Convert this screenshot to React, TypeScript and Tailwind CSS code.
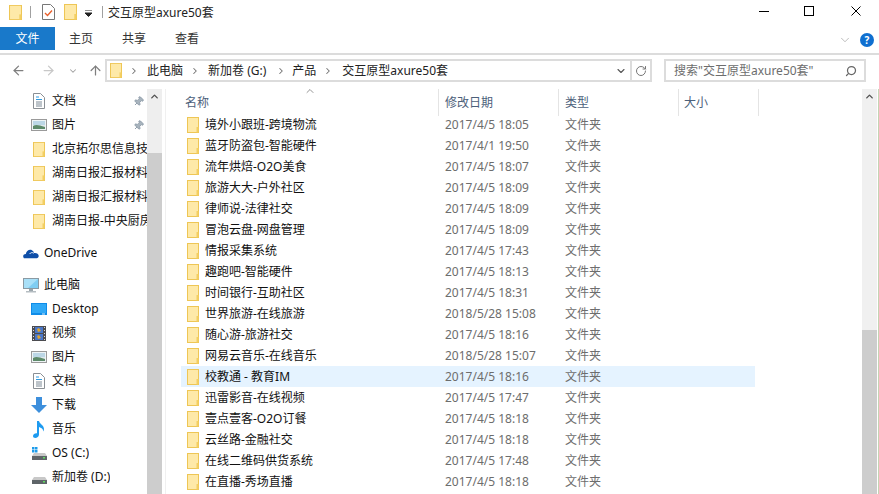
import { ArrowLeft, ArrowRight, ArrowUp, ChevronDown, ChevronRight, ChevronUp, Pin, RotateCw, Search } from "lucide-react";

const files = [
  ["境外小跟班-跨境物流", "2017/4/5 18:05"],
  ["蓝牙防盗包-智能硬件", "2017/4/1 19:50"],
  ["流年烘焙-O2O美食", "2017/4/5 18:07"],
  ["旅游大大-户外社区", "2017/4/5 18:09"],
  ["律师说-法律社交", "2017/4/5 18:09"],
  ["冒泡云盘-网盘管理", "2017/4/5 18:09"],
  ["情报采集系统", "2017/4/5 17:43"],
  ["趣跑吧-智能硬件", "2017/4/5 18:13"],
  ["时间银行-互助社区", "2017/4/5 18:31"],
  ["世界旅游-在线旅游", "2018/5/28 15:08"],
  ["随心游-旅游社交", "2017/4/5 18:16"],
  ["网易云音乐-在线音乐", "2018/5/28 15:07"],
  ["校教通 - 教育IM", "2017/4/5 18:16"],
  ["迅雷影音-在线视频", "2017/4/5 17:47"],
  ["壹点壹客-O2O订餐", "2017/4/5 18:18"],
  ["云丝路-金融社交", "2017/4/5 18:18"],
  ["在线二维码供货系统", "2017/4/5 17:48"],
  ["在直播-秀场直播", "2017/4/5 18:18"],
];

function Folder({ w = 12, h = 16 }: { w?: number; h?: number }) {
  return (
    <svg width={w} height={h} viewBox="0 0 12 16" preserveAspectRatio="none" className="shrink-0">
      <rect x="0.5" y="0.5" width="11" height="15" fill="#fde28f" stroke="#eec655" />
      <rect x="1" y="1" width="10" height="14" fill="#fee9a8" />
      <rect x="9.500" y="10" width="2" height="5.500" fill="#f3cf63" />
    </svg>
  );
}

function DocIcon() {
  return (
    <svg width="12" height="16" viewBox="0 0 12 16" className="shrink-0">
      <path d="M.5.5h7l4 4v11H.5z" fill="#fff" stroke="#8a8f94" />
      <path d="M3 4h3M3 6.500h6" stroke="#2f9ae0" />
      <path d="M3 9h6M3 11h6M3 13h6" stroke="#7d8a96" />
    </svg>
  );
}

function PictureIcon() {
  return (
    <svg width="16" height="12" viewBox="0 0 16 12" className="shrink-0">
      <rect x="0.500" y="0.500" width="15" height="11" fill="#eef4f6" stroke="#9a9a9a" />
      <rect x="2" y="2" width="12" height="4" fill="#bcd7e6" />
      <path d="M2 6h12v4H2z" fill="#5d8a6a" />
      <path d="M2 7c3-2 6-1 12 1v-2H2z" fill="#dfe9ec" />
    </svg>
  );
}

function CloudIcon() {
  return (
    <svg width="16" height="11" viewBox="0 0 17 11" className="shrink-0">
      <path d="M1 10.500C-.5 9 0 6 3 6c.5-3 3.500-5.500 6.500-4 1.500.8 2 2 2.200 3 2.500-.5 5 1 5 3.200 0 1.300-1 2.300-2 2.300z" fill="#0f4fa8" />
      <path d="M7 6c1-1.500 3-2 4.500-.8" stroke="#fff" fill="none" />
    </svg>
  );
}

function PcIcon() {
  return (
    <svg width="16" height="15" viewBox="0 0 16 15" className="shrink-0">
      <rect x="0.500" y="0.500" width="15" height="10" fill="#7fcdf2" stroke="#8b9aa3" />
      <path d="M1 1h14L5 10H1z" fill="#a9e0f8" />
      <rect x="6" y="11" width="4" height="2" fill="#9aa5ab" />
      <rect x="3" y="13" width="10" height="1.500" fill="#b5bdc2" />
    </svg>
  );
}

function DesktopIcon() {
  return (
    <svg width="16" height="12" viewBox="0 0 16 12" className="shrink-0">
      <rect width="16" height="12" fill="#0f8ce8" />
      <rect x="1" y="1" width="14" height="9" fill="#2fa9f7" />
      <rect x="11" y="10.500" width="3" height="1" fill="#d8eefc" />
    </svg>
  );
}

function VideoIcon() {
  return (
    <svg width="14" height="15" viewBox="0 0 14 15" className="shrink-0">
      <rect width="14" height="15" fill="#4c4c50" />
      <rect x="3" y="1" width="8" height="6" fill="#4a77c8" />
      <rect x="3" y="8" width="8" height="6" fill="#4a77c8" />
      <path d="M5 3l2-1 2 3-3 1zM5 10l2-1 2 3-3 1z" fill="#e0a52f" />
      <path d="M1 1h1v1H1zM1 4h1v1H1zM1 7h1v1H1zM1 10h1v1H1zM1 13h1v1H1zM12 1h1v1h-1zM12 4h1v1h-1zM12 7h1v1h-1zM12 10h1v1h-1zM12 13h1v1h-1z" fill="#ddd" />
    </svg>
  );
}

function DownloadIcon() {
  return (
    <svg width="16" height="16" viewBox="0 0 16 16" className="shrink-0">
      <path d="M5 0h6v8h5l-8 8-8-8h5z" fill="#3d8fdc" />
    </svg>
  );
}

function MusicIcon() {
  return (
    <svg width="12" height="17" viewBox="0 0 12 17" className="shrink-0">
      <path d="M4 0h2c.5 3 5 4 5 8 0 1-.3 1.800-.8 2.500.2-2.500-2-3.700-4.200-4.500V13.500C6 15.500 4 17 2.300 17 .8 17 0 16 0 15c0-1.800 2-3 4-2.700z" fill="#1e9bf0" />
    </svg>
  );
}

function DriveIcon({ os }: { os?: boolean }) {
  return (
    <svg width="15" height="13" viewBox="0 0 15 13" className="shrink-0">
      {os && <path d="M0 0h2.500v2.500H0zM3 0h2.500v2.500H3zM0 3h2.500v2.500H0zM3 3h2.500v2.500H3z" fill="#1c9bea" />}
      <path d="M2 6h11l2 3H0z" fill="#c8c8c8" />
      <rect y="9" width="15" height="4" fill="#5e6468" />
      <rect x="11" y="10" width="2" height="1.500" fill="#5fdc5f" />
    </svg>
  );
}

function NavRow({ icon, label, indent = "pl-[31px]", pin, className = "h-6" }: { icon: React.ReactNode; label: string; indent?: string; pin?: boolean; className?: string }) {
  return (
    <div className={`flex items-center gap-[5px] ${indent} ${className} relative`}>
      <span className="w-4 flex justify-center items-center shrink-0">{icon}</span>
      <span className="whitespace-nowrap overflow-hidden text-[#111]">{label}</span>
      {pin && <Pin size={11} className="absolute left-[133px] top-[7px] text-[#8d9ba8] rotate-45" fill="#a8b4be" />}
    </div>
  );
}

export default function App() {
  return (
    <div className="w-[879px] h-[494px] bg-white overflow-hidden flex flex-col text-[12px] text-[#111]" style={{ fontFamily: '"Noto Sans", "Noto Sans CJK SC", sans-serif' }}>
      {/* TITLE BAR */}
      <div className="h-[27px] flex items-center shrink-0 pl-[9px] pb-[3px]">
        <Folder w={13} h={15} />
        <div className="w-px h-3 bg-[#a0a0a0] ml-2" />
        <svg width="13" height="16" viewBox="0 0 13 16" className="ml-[11px]">
          <path d="M.5.5h8l4 4v11H.5z" fill="#fff" stroke="#777" />
          <path d="M3 9l2.500 2.500L10 6.500" stroke="#e8602c" strokeWidth="1.400" fill="none" />
        </svg>
        <div className="ml-[9px]"><Folder w={13} h={16} /></div>
        <svg width="8" height="7" viewBox="0 0 8 7" className="ml-2 mt-0.5">
          <path d="M0 0h7M0 3h7l-3.500 3.500z" stroke="#222" fill="#222" strokeWidth="1" />
        </svg>
        <div className="w-px h-3 bg-[#a0a0a0] ml-[9px]" />
        <span className="ml-[5px] mt-[1px] text-[#222]">交互原型axure50套</span>
        <div className="ml-auto flex items-center pr-[18px] -mt-[2px]">
          <svg width="10" height="10" viewBox="0 0 10 10"><path d="M0 5.500h10" stroke="#000" /></svg>
          <svg width="10" height="10" viewBox="0 0 10 10" className="ml-[35px]"><rect x="0.500" y="0.500" width="9" height="9" fill="none" stroke="#000" /></svg>
          <svg width="10" height="10" viewBox="0 0 10 10" className="ml-[37px]"><path d="M.5.5l9 9M9.500.5l-9 9" stroke="#000" /></svg>
        </div>
      </div>

      {/* RIBBON */}
      <div className="h-[28px] shrink-0 flex items-start border-b-2 border-[#dcdcdc]">
        <div className="w-[55px] h-[23px] bg-[#1979ca] text-white flex items-center justify-center">文件</div>
        <div className="flex h-[23px] items-center pl-[14px] gap-[29px] text-[#333]">
          <span>主页</span>
          <span>共享</span>
          <span>查看</span>
        </div>
        <div className="ml-auto flex items-center h-[26px] pr-[5px]">
          <ChevronDown size={14} strokeWidth={1.200} className="text-[#a0a0a0] mr-[8px]" />
          <div className="w-[14px] h-[14px] rounded-full bg-[#0f6fd0] text-white font-bold text-[10px] flex items-center justify-center">?</div>
        </div>
      </div>

      {/* ADDRESS BAR */}
      <div className="h-[34px] shrink-0 flex items-center pb-[3px]">
        <ArrowLeft size={15} strokeWidth={2} className="ml-[11px] text-[#7f7f7f]" />
        <ArrowRight size={15} strokeWidth={2} className="ml-[15px] text-[#c8c8c8]" />
        <ChevronDown size={10} strokeWidth={2.500} className="ml-[12px] text-[#a0a0a0]" />
        <ArrowUp size={15} strokeWidth={2} className="ml-[10px] text-[#7f7f7f]" />
        <div className="ml-[2px] w-[547px] h-[23px] border-2 border-[#dcdcdc] flex items-center pl-[3px] text-[#222]">
          <Folder w={12} h={15} />
          <ChevronRight size={10} strokeWidth={2.500} className="ml-[7px] text-[#707070]" />
          <span className="ml-[8px]">此电脑</span>
          <ChevronRight size={10} strokeWidth={2.500} className="ml-[7px] text-[#707070]" />
          <span className="ml-[8px]">新加卷 (G:)</span>
          <ChevronRight size={10} strokeWidth={2.500} className="ml-[10px] text-[#707070]" />
          <span className="ml-[6px]">产品</span>
          <ChevronRight size={10} strokeWidth={2.500} className="ml-[7px] text-[#707070]" />
          <span className="ml-[9px]">交互原型axure50套</span>
          <ChevronDown size={12} strokeWidth={2.200} className="ml-auto mr-[3px] text-[#555]" />
          <div className="w-[20px] h-[23px] border-l-2 border-[#dcdcdc] flex items-center justify-center">
            <RotateCw size={12} strokeWidth={2} className="text-[#777]" />
          </div>
        </div>
        <div className="ml-[12px] w-[202px] h-[23px] border-2 border-[#dcdcdc] flex items-center pl-[8px] pr-[7px] text-[#6d6d6d]">
          <span>搜索"交互原型axure50套"</span>
          <Search size={12} strokeWidth={2.500} className="ml-auto text-[#666] -scale-x-100" />
        </div>
      </div>

      {/* MAIN */}
      <div className="flex-1 min-h-0 flex">
        {/* SIDEBAR */}
        <aside className="w-[147px] shrink-0 overflow-hidden">
          <NavRow icon={<DocIcon />} label="文档" pin />
          <NavRow icon={<PictureIcon />} label="图片" pin />
          <NavRow icon={<Folder w={12} h={15} />} label="北京拓尔思信息技" />
          <NavRow icon={<Folder w={12} h={15} />} label="湖南日报汇报材料" />
          <NavRow icon={<Folder w={12} h={15} />} label="湖南日报汇报材料" />
          <NavRow icon={<Folder w={12} h={15} />} label="湖南日报-中央厨房" />
          <NavRow icon={<CloudIcon />} label="OneDrive" indent="pl-[23px]" className="h-6 mt-2" />
          <NavRow icon={<PcIcon />} label="此电脑" indent="pl-[23px]" className="h-6 mt-2" />
          <NavRow icon={<DesktopIcon />} label="Desktop" />
          <NavRow icon={<VideoIcon />} label="视频" />
          <NavRow icon={<PictureIcon />} label="图片" />
          <NavRow icon={<DocIcon />} label="文档" />
          <NavRow icon={<DownloadIcon />} label="下载" />
          <NavRow icon={<MusicIcon />} label="音乐" />
          <NavRow icon={<DriveIcon os />} label="OS (C:)" />
          <NavRow icon={<DriveIcon />} label="新加卷 (D:)" />
        </aside>

        {/* SIDEBAR SCROLLBAR */}
        <div className="w-[15px] shrink-0 bg-[#eeeeee] flex flex-col">
          <div className="h-[64px] flex justify-center pt-[2px]">
            <ChevronUp size={11} strokeWidth={3} className="text-[#505050]" />
          </div>
          <div className="flex-1 bg-[#cdcdcd]" />
        </div>

        <div className="w-[3px] shrink-0" />
        <div className="w-px shrink-0 bg-[#f0f0f0]" />

        {/* FILE LIST */}
        <section className="flex-1 min-w-0 flex flex-col pl-[15px]">
          <div className="h-[27px] shrink-0 flex text-[#4c607a] relative">
            <ChevronUp size={12} strokeWidth={1.500} className="absolute left-[123px] -top-[4px] text-[#707070]" />
            <div className="w-[258px] border-r border-[#e4e4e4] pl-[4px] pt-[5px]">名称</div>
            <div className="w-[120px] border-r border-[#e4e4e4] pl-[6px] pt-[5px]">修改日期</div>
            <div className="w-[120px] border-r border-[#e4e4e4] pl-[6px] pt-[5px]">类型</div>
            <div className="w-[80px] border-r border-[#e4e4e4] pl-[5px] pt-[5px]">大小</div>
          </div>
          <div className="w-[574px] -mt-[2px]">
            {files.map(([name, date], i) => (
              <div key={name} className={`h-[21px] flex items-center ${i === 12 ? "bg-[#e5f3ff]" : ""}`}>
                <div className="w-[264px] pl-[6px] flex items-center gap-[6px] text-[#111]">
                  <Folder />
                  <span>{name}</span>
                </div>
                <div className="w-[120px] text-[#6d6d6d]">{date}</div>
                <div className="text-[#6d6d6d]">文件夹</div>
              </div>
            ))}
          </div>
        </section>

        {/* LIST SCROLLBAR */}
        <div className="w-[15px] shrink-0 bg-[#f0f0f0] flex flex-col">
          <div className="h-[241px] flex justify-center pt-[2px]">
            <ChevronUp size={11} strokeWidth={3} className="text-[#505050]" />
          </div>
          <div className="flex-1 bg-[#cdcdcd]" />
        </div>
        <div className="w-px shrink-0 ml-px bg-[#c4d4b4]" />
      </div>
    </div>
  );
}
